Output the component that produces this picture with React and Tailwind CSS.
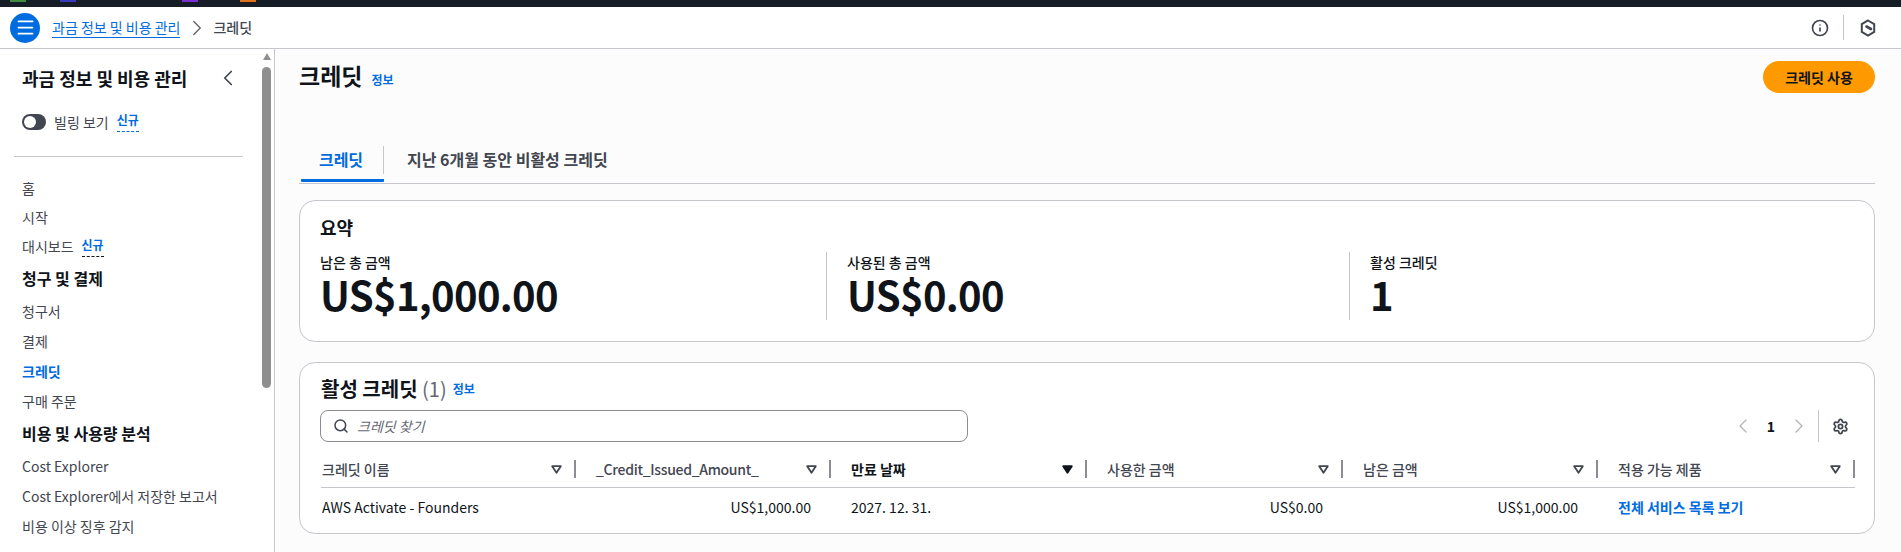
import { ChevronLeft, ChevronRight, Info, Menu, Search, Settings } from "lucide-react";

const font = "font-['Noto_Sans_CJK_KR','Noto_Sans',sans-serif]";

function NewBadge({ className }) {
  return <span className={`ml-2 leading-[16px] pb-[3px] text-[12px] font-bold text-[#006ce0] border-b border-dashed ${className}`}>신규</span>;
}

function NavItem({ children, active, short }) {
  return (
    <div className={`${short ? "h-[29px]" : "h-[30px]"} flex items-center text-[14px] ${active ? "font-bold text-[#006ce0]" : "text-[#424650]"}`}>
      {children}
    </div>
  );
}

function NavHeading({ children }) {
  return <div className="h-[33px] mb-[2px] flex items-center text-[16px] font-bold text-[#0f141a]">{children}</div>;
}

function Sidebar() {
  return (
    <aside className="w-[275px] shrink-0 border-r border-[#c6c6cd] bg-white flex overflow-hidden">
      <div className="w-[262px] shrink-0">
        <div className="pl-[22px] pr-[21px] pt-[17px] h-[41px] flex items-center justify-between">
          <span className="text-[18px] font-bold text-[#0f141a]">과금 정보 및 비용 관리</span>
          <ChevronLeft size={26} strokeWidth={1.6} className="text-[#424650]" />
        </div>
        <div className="pl-[22px] mt-[22px] h-[20px] flex items-center text-[14px] text-[#424650]">
          <span className="w-[24px] h-[16px] rounded-full bg-[#424650] flex items-center pl-[2px] mr-[8px]">
            <span className="w-[12px] h-[12px] rounded-full bg-white" />
          </span>
          빌링 보기
          <NewBadge className="border-[#006ce0]" />
        </div>
        <div className="ml-[14px] mt-[24px] border-t border-[#c6c6cd] w-[229px]" />
        <div className="pl-[22px] pt-[17px]">
          <NavItem short>홈</NavItem>
          <NavItem short>시작</NavItem>
          <NavItem short>대시보드<NewBadge className="border-[#0f141a]" /></NavItem>
          <NavHeading>청구 및 결제</NavHeading>
          <NavItem>청구서</NavItem>
          <NavItem>결제</NavItem>
          <NavItem active>크레딧</NavItem>
          <NavItem>구매 주문</NavItem>
          <NavHeading>비용 및 사용량 분석</NavHeading>
          <NavItem>Cost Explorer</NavItem>
          <NavItem>Cost Explorer에서 저장한 보고서</NavItem>
          <NavItem>비용 이상 징후 감지</NavItem>
        </div>
      </div>
      <div className="w-[9px] flex flex-col items-center pt-[4px]">
        <span className="w-0 h-0 border-x-[4px] border-x-transparent border-b-[7px] border-b-[#8f8f8f]" />
        <span className="w-[9px] h-[321px] mt-[7px] rounded-full bg-[#8f8f8f]" />
      </div>
    </aside>
  );
}

function SummaryItem({ label, value, width, divider }) {
  return (
    <div className={`${width} shrink-0 h-[68px] ${divider ? "border-l border-[#c6c6cd] pl-[20px]" : ""}`}>
      <div className="text-[14px] leading-[20px] font-medium text-[#0f141a]">{label}</div>
      <div className="text-[40px] leading-[44px] font-bold tracking-[-0.7px] text-[#0f141a]">{value}</div>
    </div>
  );
}

function SortIcon({ active }) {
  return (
    <svg width="11" height="9" viewBox="0 0 11 9" className="shrink-0">
      <path d="M1.2 1.2h8.6L5.5 7.8z" fill={active ? "#0f141a" : "none"} stroke={active ? "#0f141a" : "#424650"} strokeWidth="1.8" strokeLinejoin="round" />
    </svg>
  );
}

const columns = [
  { label: "크레딧 이름", cell: "AWS Activate - Founders", width: "w-[255px]", first: true },
  { label: "_Credit_Issued_Amount_", cell: "US$1,000.00", width: "w-[255px]", right: true, tight: true },
  { label: "만료 날짜", cell: "2027. 12. 31.", width: "w-[256px]", bold: true, active: true },
  { label: "사용한 금액", cell: "US$0.00", width: "w-[256px]", right: true },
  { label: "남은 금액", cell: "US$1,000.00", width: "w-[255px]", right: true },
  { label: "적용 가능 제품", cell: "전체 서비스 목록 보기", width: "w-[257px]", link: true },
];

function CreditsTable() {
  return (
    <div className="mt-[9px] text-[14px] w-[1534px]">
      <div className="flex border-b border-[#c6c6cd] h-[37px] items-center">
        {columns.map((c) => (
          <div key={c.label} className={`${c.width} shrink-0 h-[18px] flex items-center justify-between pr-[12px] border-r-2 border-[#8c8c94] ${c.first ? "pl-[1px]" : "pl-[20px]"}`}>
            <span className={`${c.bold ? "font-bold text-[#0f141a]" : "font-medium text-[#424650]"} ${c.tight ? "tracking-[-0.3px]" : ""}`}>{c.label}</span>
            <SortIcon active={c.active} />
          </div>
        ))}
      </div>
      <div className="flex h-[39px] items-center">
        {columns.map((c) => (
          <div key={c.label} className={`${c.width} shrink-0 ${c.right ? "text-right pr-[20px]" : c.first ? "pl-[1px]" : "pl-[20px]"} ${c.link ? "font-bold text-[#006ce0]" : "text-[#0f141a]"}`}>
            {c.cell}
          </div>
        ))}
      </div>
    </div>
  );
}

export default function App() {
  return (
    <div className={`${font} w-[1901px] h-[552px] overflow-hidden flex flex-col bg-[#fcfcfc]`}>
      <div className="h-[7px] bg-[#161d26] shrink-0 flex items-start">
        <span className="ml-[10px] w-[16px] h-[2px] bg-[#3d8b3d]" />
        <span className="ml-[34px] w-[16px] h-[2px] bg-[#3a3ac0]" />
        <span className="ml-[106px] w-[16px] h-[2px] bg-[#7a2fd0]" />
        <span className="ml-[42px] w-[16px] h-[2px] bg-[#e0701a]" />
      </div>
      <header className="h-[42px] shrink-0 bg-white border-b border-[#c6c6cd] flex items-center pl-[10px] pr-[25px] text-[14px]">
        <span className="w-[30px] h-[30px] rounded-full bg-[#006ce0] flex items-center justify-center text-white">
          <Menu size={21} strokeWidth={2} />
        </span>
        <span className="ml-[12px] text-[#006ce0] border-b border-[#006ce0] leading-[19px]">과금 정보 및 비용 관리</span>
        <ChevronRight size={26} strokeWidth={1.3} className="ml-[4px] mr-[3px] text-[#656871]" />
        <span className="font-medium text-[#424650]">크레딧</span>
        <Info size={18} strokeWidth={2.2} className="ml-auto text-[#424650]" />
        <span className="h-[25px] ml-[14px] mr-[16px] border-l border-[#c6c6cd]" />
        <svg width="16" height="18" viewBox="0 0 16 18" fill="none" stroke="#424650" strokeWidth="2">
          <path d="M8 1.5l6.2 3.6v7.8L8 16.5l-6.2-3.6V5.1z" />
          <path d="M6.5 7.5L11 10" strokeWidth="2.6" strokeLinecap="round" />
        </svg>
      </header>
      <div className="flex flex-1 min-h-0">
        <Sidebar />
        <main className="flex-1 pl-[24px] pr-[26px] min-w-0">
          <div className="flex items-start justify-between pt-[12px] h-[97px]">
            <div className="flex items-start">
              <h1 className="text-[23px] leading-[28px] font-bold text-[#0f141a]">크레딧</h1>
              <span className="ml-[9px] mt-[10px] text-[12px] font-bold text-[#006ce0]">정보</span>
            </div>
            <button className="w-[112px] h-[32px] rounded-full bg-[#ff9900] text-[14px] font-bold text-[#0f141a]">크레딧 사용</button>
          </div>
          <div className="flex h-[38px] border-b border-[#c6c6cd] items-start text-[16px] font-bold">
            <div className="ml-[2px] w-[83px] h-[36px] border-b-[3px] border-[#006ce0] text-[#006ce0] rounded-b-[1px]">
              <div className="h-[28px] border-r border-[#c6c6cd] flex items-center justify-center pr-[2px] pb-[2px]">크레딧</div>
            </div>
            <div className="ml-[23px] h-[28px] pb-[2px] flex items-center text-[#424650]">지난 6개월 동안 비활성 크레딧</div>
          </div>
          <section className="mt-[16px] h-[142px] rounded-[16px] border border-[#c6c6cd] bg-white px-[20px] pt-[13px]">
            <h2 className="text-[18px] leading-[26px] font-bold text-[#0f141a]">요약</h2>
            <div className="flex mt-[12px]">
              <SummaryItem width="w-[506px]" label="남은 총 금액" value="US$1,000.00" />
              <SummaryItem width="w-[523px]" label="사용된 총 금액" value="US$0.00" divider />
              <SummaryItem width="w-[480px]" label="활성 크레딧" value="1" divider />
            </div>
          </section>
          <section className="mt-[20px] h-[172px] rounded-[16px] border border-[#c6c6cd] bg-white pl-[21px] pt-[13px]">
            <div className="flex items-center h-[26px]">
              <h2 className="text-[20px] leading-[26px] font-bold text-[#0f141a]">활성 크레딧 <span className="font-normal text-[#656871]">(1)</span></h2>
              <span className="ml-[6px] text-[12px] font-bold text-[#006ce0]">정보</span>
            </div>
            <div className="flex items-center mt-[8px] w-[1534px]">
              <div className="-ml-[1px] w-[648px] h-[32px] rounded-[8px] border border-[#8c8c94] flex items-center pl-[12px] text-[14px] italic text-[#656871]">
                <Search size={16} strokeWidth={2.3} className="text-[#424650] mr-[8px]" />
                크레딧 찾기
              </div>
              <ChevronLeft size={24} strokeWidth={1.3} className="ml-auto text-[#b4b4bb]" />
              <span className="w-[32px] text-center text-[14px] font-bold text-[#0f141a]">1</span>
              <ChevronRight size={24} strokeWidth={1.3} className="text-[#b4b4bb]" />
              <span className="h-[32px] ml-[7px] mr-[13px] border-l border-[#c6c6cd]" />
              <Settings size={17} strokeWidth={2.5} className="text-[#424650] mr-[6px]" />
            </div>
            <CreditsTable />
          </section>
        </main>
      </div>
    </div>
  );
}
